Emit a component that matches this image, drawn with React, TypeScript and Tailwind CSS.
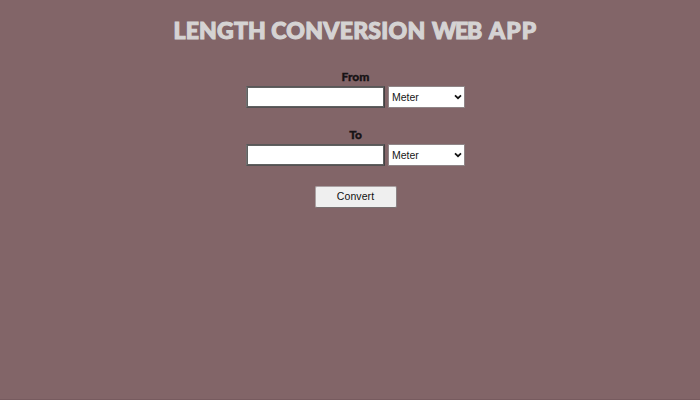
import React from "react";

function Field({ label, className }: { label: string; className: string }) {
  return (
    <div className={`flex flex-col items-center ${className}`}>
      <label className="h-[16px] font-['Lato'] text-[12px] leading-[14px] font-black text-[#171315] [-webkit-text-stroke:0.3px_#171315]">
        {label}
      </label>
      <div className="flex gap-[3px]">
        <input
          type="text"
          aria-label={label}
          className="h-[22px] w-[139px] border border-t-[#595758] border-r-[#444142] border-b-[#545253] border-l-[#717171] bg-white px-1 text-[10px] shadow-[inset_1px_1px_0_#606060,inset_-1px_-1px_0_#606060] outline-none"
        />
        <div className="flex h-[22px] w-[77px] items-center justify-between border border-[#8f8587] bg-white pr-[2px] pl-[3px] font-['Liberation_Sans',Arial,sans-serif] text-[10.5px] leading-none text-[#171717]">
          <span>Meter</span>
          <svg width="8" height="6" viewBox="0 0 8 6" fill="none" stroke="#111" strokeWidth="1.7">
            <path d="M1 1.3 4 4.2 7 1.3" />
          </svg>
        </div>
      </div>
    </div>
  );
}

export default function App() {
  return (
    <main className="flex h-[400px] w-[700px] flex-col items-center overflow-hidden border-b border-[#775b5f] bg-[#826568] pt-[17px] pl-[11px]">
      <h1 className="flex h-[28px] w-[364px] font-['Lato'] text-[23px] leading-[27px] font-black whitespace-nowrap text-[#d5d3d3] [-webkit-text-stroke:1.1px_#d5d3d3]">
        <span className="w-[98px] tracking-[0.2px]">LENGTH </span>
        <span className="w-[161px] tracking-[0.25px]">CONVERSION </span>
        <span className="w-[57px] tracking-[-1.3px]">WEB </span>
        <span className="tracking-[1.2px]">APP</span>
      </h1>
      <Field label="From" className="mt-[25px]" />
      <Field label="To" className="mt-[20px]" />
      <button className="mt-[20px] h-[22px] w-[82px] rounded-[2px] border border-t-[#aaa1a3] border-r-[#8b8284] border-b-[#777071] border-l-[#aaa1a3] bg-[#efefef] pb-[2px] font-['Liberation_Sans',Arial,sans-serif] text-[10.5px] leading-none tracking-[0.1px] text-[#111]">
        Convert
      </button>
    </main>
  );
}
